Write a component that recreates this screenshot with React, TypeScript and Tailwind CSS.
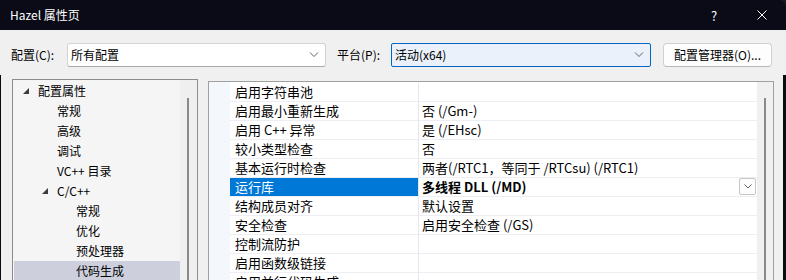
import React from "react";

const font = "font-['Noto_Sans_CJK_SC','Noto_Sans',sans-serif]";

type TreeItem = { label: string; level: number; open?: boolean; selected?: boolean };

const tree: TreeItem[] = [
  { label: "配置属性", level: 0, open: true },
  { label: "常规", level: 1 },
  { label: "高级", level: 1 },
  { label: "调试", level: 1 },
  { label: "VC++ 目录", level: 1 },
  { label: "C/C++", level: 1, open: true },
  { label: "常规", level: 2 },
  { label: "优化", level: 2 },
  { label: "预处理器", level: 2 },
  { label: "代码生成", level: 2, selected: true },
  { label: "链接器", level: 1 },
];

const props: { name: string; value: string; selected?: boolean }[] = [
  { name: "启用字符串池", value: "" },
  { name: "启用最小重新生成", value: "否 (/Gm-)" },
  { name: "启用 C++ 异常", value: "是 (/EHsc)" },
  { name: "较小类型检查", value: "否" },
  { name: "基本运行时检查", value: "两者(/RTC1，等同于 /RTCsu) (/RTC1)" },
  { name: "运行库", value: "多线程 DLL (/MD)", selected: true },
  { name: "结构成员对齐", value: "默认设置" },
  { name: "安全检查", value: "启用安全检查 (/GS)" },
  { name: "控制流防护", value: "" },
  { name: "启用函数级链接", value: "" },
  { name: "启用并行代码生成", value: "" },
];

function Chevron() {
  return (
    <svg width="10" height="6" viewBox="0 0 10 6" fill="none">
      <path d="M1 0.5 L5 4.5 L9 0.5" stroke="#606060" strokeWidth="1" />
    </svg>
  );
}

function Expander() {
  return (
    <svg width="6" height="6" viewBox="0 0 6 6">
      <polygon points="6,0 6,6 0,6" fill="#3c3c3c" />
    </svg>
  );
}

export default function App() {
  return (
    <div className={`w-[786px] h-[280px] overflow-hidden bg-[#181818] flex flex-col text-black ${font}`}>
      {/* title bar */}
      <div className="h-[30px] shrink-0 bg-[#0b0b17] rounded-tr-[8px] flex items-center pl-[10px] text-white text-[12px]">
        <span>Hazel 属性页</span>
        <span className="ml-auto w-[10px] text-center text-[13px] leading-none mr-[38px]">?</span>
        <svg width="10" height="10" viewBox="0 0 10 10" className="mr-[19px]">
          <path d="M0.5 0.5 L9.5 9.5 M9.5 0.5 L0.5 9.5" stroke="#ffffff" strokeWidth="1" />
        </svg>
      </div>

      {/* toolbar */}
      <div className="h-[45px] shrink-0 bg-[#f0f0f0] flex items-start pt-[13px] pl-[11px] text-[12px]">
        <div className="flex items-center h-[24px]">
          <span className="w-[56px]">配置(C):</span>
          <div className="w-[259px] h-[24px] bg-white border border-[#d3d3d3] border-b-[#a8a8a8] rounded-[3px] flex items-center pl-[3px] pr-[6px]">
            <span>所有配置</span>
            <span className="ml-auto">
              <Chevron />
            </span>
          </div>
        </div>
        <div className="flex items-center h-[24px] ml-[11px]">
          <span className="w-[54px]">平台(P):</span>
          <div className="w-[260px] h-[24px] bg-[#eaf1fb] border border-[#0067c0] rounded-[2px] flex items-center pl-[3px] pr-[6px]">
            <span>活动(x64)</span>
            <span className="ml-auto">
              <Chevron />
            </span>
          </div>
        </div>
        <button className="ml-[12px] w-[109px] h-[24px] bg-[#fdfdfd] border border-[#d0d0d0] border-b-[#b8b8b8] rounded-[4px] flex items-center justify-center">
          配置管理器(O)...
        </button>
      </div>

      {/* panes */}
      <div className="flex-1 bg-[#f0f0f0] border-l border-r-[3px] border-[#0c0c0c] flex items-start pt-[4px] pl-[11px]">
        <div className="w-[186px] h-[230px] border border-[#8c8c8c] bg-[#f5f5f5] flex">
          <div className="flex-1 pt-[1px] text-[12px]">
            {tree.map((t, i) => (
              <div
                key={i}
                className={`h-[20px] ml-[1px] flex items-center ${t.selected ? "bg-[#cdd0dc]" : ""}`}
                style={{ paddingLeft: 9 + t.level * 19 }}
              >
                <span className="w-[15px] flex items-center">{t.open ? <Expander /> : null}</span>
                <span>{t.label}</span>
              </div>
            ))}
          </div>
          <div className="w-[17px] bg-[#efefef] pl-[7px] pt-[18px]">
            <div className="w-[2px] h-full bg-[#8a8a8a]" />
          </div>
        </div>

        <div className="ml-[10px] mt-[2px] w-[566px] h-[230px] border border-[#a0a0a0] bg-white flex">
          <div className="w-[21px] bg-[#f4f7fc]" />
          <div className="w-[527px] pt-[1px] text-[13px]">
            {props.map((p, i) => (
              <div key={i} className="h-[19px] flex">
                <div
                  className={`w-[189px] border-b border-r border-b-[#eceef3] border-r-[#e4e7ec] pl-[5px] leading-[18px] ${
                    p.selected ? "bg-[#0078d7] text-white" : ""
                  }`}
                >
                  {p.name}
                </div>
                <div className="w-[338px] border-b border-[#eceef3] pl-[3px] leading-[18px] flex items-start">
                  <span className={p.selected ? "font-bold" : ""}>{p.value}</span>
                  {p.selected && (
                    <div className="ml-auto mr-[1px] w-[17px] h-[17px] bg-[#fdfdfd] border border-[#c6c6c6] rounded-[2px] flex items-center justify-center">
                      <svg width="8" height="5" viewBox="0 0 8 5" fill="none">
                        <path d="M0.5 0.5 L4 4 L7.5 0.5" stroke="#606060" strokeWidth="1" />
                      </svg>
                    </div>
                  )}
                </div>
              </div>
            ))}
          </div>
          <div className="w-[16px] bg-[#f0f0f0] pl-[7px] pt-[16px]">
            <div className="w-[2px] h-full bg-[#8a8a8a]" />
          </div>
        </div>
      </div>
    </div>
  );
}
